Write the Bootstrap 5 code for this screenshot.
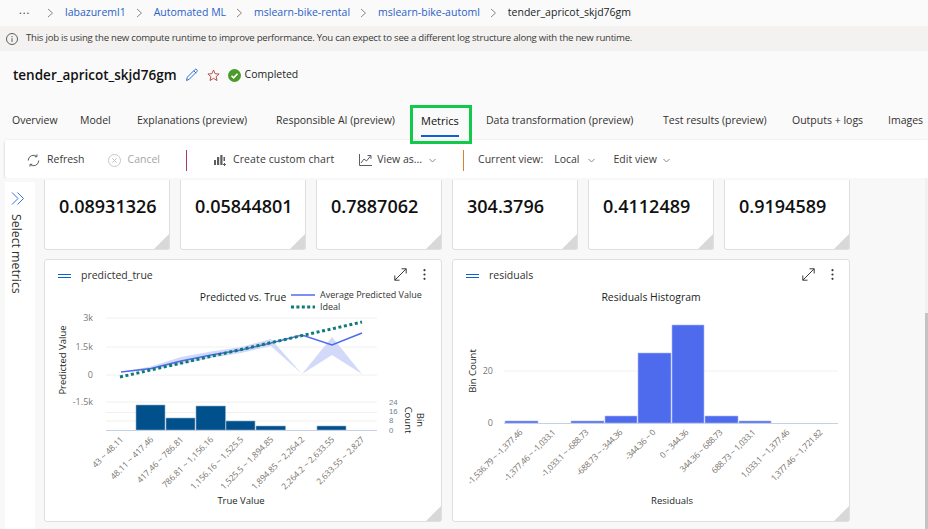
<!DOCTYPE html>
<html lang="en">
<head>
  <meta charset="UTF-8" />
  <meta name="viewport" content="width=device-width, initial-scale=1.0" />
  <title>tender_apricot_skjd76gm - Metrics</title>
  <link href="https://cdn.jsdelivr.net/npm/bootstrap@5.3.3/dist/css/bootstrap.min.css" rel="stylesheet" />
  <style>
    html, body { height: 529px; overflow: hidden; }
    body { font-family: "Open Sans", "Liberation Sans", sans-serif; font-size: 11px; background: #fafafa; color: #201f1e; }
    svg { display: block; flex: none; }

    .crumbs { height: 26px; padding-left: 19px; font-size: 10.5px; }
    .crumbs a { color: #2b5fc7; text-decoration: none; }
    .crumb-dots { width: 12px; letter-spacing: 1px; line-height: 8px; margin-top: -6px; }
    .crumb-sep { margin: 0 11px 0 10px; }
    .crumb-gap-1 { margin-left: 16px; }

    .info-bar { height: 25px; padding-left: 6px; background: #f3f2f1; font-size: 9.6px; letter-spacing: -.24px; color: #3b3a39; }

    .title-row { height: 54px; padding: 0 0 6px 13px; }
    .run-name { font-size: 13.5px; font-weight: 600; color: #111; margin: 0; }
    .run-status { font-size: 10.5px; }

    .tab-row { height: 35px; position: relative; }
    .tab-item { position: absolute; top: 8px; font-size: 10.5px; white-space: nowrap; color: #323130; }
    .tab-active { color: #111; font-size: 11px; font-weight: 500; }
    .tab-active::after { content: ""; display: block; height: 2px; background: #0f5fd7; margin-top: 5px; }
    .tab-box { position: absolute; left: 410px; top: 0; width: 62px; height: 39px; border: 3px solid #11c94a; z-index: 3; }

    .cmd-bar { height: 38px; margin-left: 5px; padding-top: 2px; background: #fff; border-radius: 2px 0 0 2px; box-shadow: 0 1px 3px rgba(0,0,0,.2); font-size: 10.5px; color: #3b3a39; }
    .cmd-item { white-space: nowrap; }
    .cmd-off { color: #a8a6a4; }
    .cmd-rule { width: 1px; height: 21px; }
    .rule-pink { background: #a4397a; }
    .rule-orange { background: #d9822b; }

    .work-area { height: 351px; background: #f8f8f8; }
    .metric-side { width: 30px; margin: 4px 0 0 5px; background: #fff; padding: 10px 0 0 2px; }
    .side-chevrons { margin-left: 4px; }
    .side-label { writing-mode: vertical-rl; font-size: 12.3px; color: #323130; margin-top: 9px; }
    .tile-area { width: 806px; margin-left: 9px; padding-top: 2px; }
    .value-tile, .chart-tile { position: relative; background: #fff; border: 1px solid #e1dfdd; }
    .value-tile { width: 126px; height: 70px; border-top: 0; border-radius: 0 0 3px 3px; font-size: 18px; font-weight: 600; color: #111; padding: 13px 0 0 14px; }
    .chart-tile { width: 398px; height: 263px; border-radius: 3px; }
    .value-tile::after, .chart-tile::after { content: ""; position: absolute; right: 0; bottom: 0; width: 15px; height: 15px; background: #d8d8d8; clip-path: polygon(100% 0, 100% 100%, 0 100%); }
    .chart-head { height: 26px; padding: 6px 15px 0 13px; font-size: 10.5px; color: #323130; }
    .chart-head-icons { margin: 0 0 3px auto; }
    .side-track { width: 3px; margin-left: auto; background: #f1f1f1; padding-top: 135px; }
    .side-thumb { height: 216px; background: #c4c4c4; }

    .txt-title { font-size: 10.4px; fill: #201f1e; }
    .txt-legend { font-size: 9px; fill: #333; }
    .txt-axis { font-size: 9.5px; fill: #201f1e; }
    .txt-tick { font-size: 9px; fill: #7a7a7a; }
    .txt-right { font-family: "Liberation Sans", sans-serif; font-size: 7.8px; fill: #6f7f99; }
    .txt-bin { font-size: 8.4px; fill: #77706a; }
    .txt-bin-tight { letter-spacing: -.35px; }
  </style>
</head>
<body>

  <!-- Breadcrumb -->
  <nav class="crumbs d-flex align-items-center">
    <span class="crumb-dots">...</span>
    <svg class="crumb-sep crumb-gap-1" width="7" height="10" viewBox="0 0 7 10"><path d="M1 1l4.500 4-4.500 4" fill="none" stroke="#8a8886"/></svg>
    <a href="#">labazureml1</a>
    <svg class="crumb-sep" width="7" height="10" viewBox="0 0 7 10"><path d="M1 1l4.500 4-4.500 4" fill="none" stroke="#8a8886"/></svg>
    <a href="#">Automated ML</a>
    <svg class="crumb-sep" width="7" height="10" viewBox="0 0 7 10"><path d="M1 1l4.500 4-4.500 4" fill="none" stroke="#8a8886"/></svg>
    <a href="#">mslearn-bike-rental</a>
    <svg class="crumb-sep" width="7" height="10" viewBox="0 0 7 10"><path d="M1 1l4.500 4-4.500 4" fill="none" stroke="#8a8886"/></svg>
    <a href="#">mslearn-bike-automl</a>
    <svg class="crumb-sep" width="7" height="10" viewBox="0 0 7 10"><path d="M1 1l4.500 4-4.500 4" fill="none" stroke="#8a8886"/></svg>
    <span>tender_apricot_skjd76gm</span>
  </nav>

  <!-- Info message -->
  <div class="info-bar d-flex align-items-center gap-2">
    <svg width="12" height="12" viewBox="0 0 12 12" fill="none" stroke="#605e5c"><circle cx="6" cy="6" r="5.500"/><path d="M6 5.200v3.800M6 3v1.200"/></svg>
    <span>This job is using the new compute runtime to improve performance. You can expect to see a different log structure along with the new runtime.</span>
  </div>

  <!-- Run title -->
  <div class="title-row d-flex align-items-center">
    <h1 class="run-name">tender_apricot_skjd76gm</h1>
    <svg class="ms-2" width="14" height="14" viewBox="0 0 14 14" fill="none" stroke="#2b6fd6"><path d="M1.500 12.500l.8-3.300 7.500-7.500a1.300 1.300 0 0 1 2 0 1.400 1.400 0 0 1 0 2l-7.500 7.500z"/><path d="M8.800 2.800l2.400 2.400"/></svg>
    <svg class="ms-2" width="13" height="13" viewBox="0 0 13 13" fill="none" stroke="#b5524f"><path d="M6.500 1l1.600 3.700 4 .3-3 2.600.9 3.900-3.500-2.100L3 11.500l.9-3.900-3-2.600 4-.3z"/></svg>
    <svg class="ms-2" width="13" height="13" viewBox="0 0 13 13"><circle cx="6.500" cy="6.500" r="6.500" fill="#4c9a2a"/><path d="M3.500 6.800l2.100 2.100 3.900-4.200" fill="none" stroke="#fff" stroke-width="1.600"/></svg>
    <span class="run-status ms-1">Completed</span>
  </div>

  <!-- Tabs -->
  <div class="tab-row">
    <span class="tab-item" style="left:12px">Overview</span>
    <span class="tab-item" style="left:80px">Model</span>
    <span class="tab-item" style="left:137px">Explanations (preview)</span>
    <span class="tab-item" style="left:276px">Responsible AI (preview)</span>
    <span class="tab-item tab-active" style="left:421px">Metrics</span>
    <span class="tab-item" style="left:486px">Data transformation (preview)</span>
    <span class="tab-item" style="left:663px">Test results (preview)</span>
    <span class="tab-item" style="left:792px">Outputs + logs</span>
    <span class="tab-item" style="left:888px">Images</span>
    <div class="tab-box"></div>
  </div>

  <!-- Command bar -->
  <div class="cmd-bar d-flex align-items-center">
    <svg style="margin-left:22px" width="13" height="13" viewBox="0 0 13 13" fill="none" stroke="#605e5c"><path d="M11.800 6.500a5.300 5.300 0 0 1-8.700 4M1.200 6.500a5.300 5.300 0 0 1 8.700-4"/><path d="M10 .4v2.300H7.700M3 12.600v-2.300h2.300"/></svg>
    <span class="cmd-item" style="margin-left:7px">Refresh</span>
    <svg style="margin-left:23px" width="13" height="13" viewBox="0 0 13 13" fill="none" stroke="#c8c6c4"><circle cx="6.500" cy="6.500" r="6"/><path d="M4.300 4.300l4.400 4.400M8.700 4.300l-4.400 4.400"/></svg>
    <span class="cmd-item cmd-off" style="margin-left:7px">Cancel</span>
    <div class="cmd-rule rule-pink" style="margin-left:26px"></div>
    <svg style="margin-left:26px" width="14" height="14" viewBox="0 0 14 14" fill="#605e5c"><path d="M1 7h2v5H1zM4 4h2.200v8H4zM7.300 2h2.200v10H7.300zM10.500 4H12v4h-1.500z"/><path d="M11 10h1v1h1v1h-1v1h-1v-1h-1v-1h1z"/></svg>
    <span class="cmd-item" style="margin-left:6px;letter-spacing:.1px">Create custom chart</span>
    <svg style="margin-left:25px" width="13" height="12" viewBox="0 0 13 12" fill="none" stroke="#605e5c"><path d="M.5 0v11.500H13"/><path d="M2 9l3-4 2.500 2L11.500 2M8.500 1.500h3.500V5"/></svg>
    <span class="cmd-item" style="margin-left:5px">View as...</span>
    <svg style="margin-left:7px" width="7" height="5" viewBox="0 0 7 5" fill="none" stroke="#8a8886"><path d="M.5 1l3 3 3-3"/></svg>
    <div class="cmd-rule rule-orange" style="margin-left:27px"></div>
    <span class="cmd-item" style="margin-left:14px">Current view:</span>
    <span class="cmd-item" style="margin-left:11px">Local</span>
    <svg style="margin-left:8px" width="7" height="5" viewBox="0 0 7 5" fill="none" stroke="#8a8886"><path d="M.5 1l3 3 3-3"/></svg>
    <span class="cmd-item" style="margin-left:19px">Edit view</span>
    <svg style="margin-left:6px" width="7" height="5" viewBox="0 0 7 5" fill="none" stroke="#8a8886"><path d="M.5 1l3 3 3-3"/></svg>
  </div>

  <!-- Work area -->
  <div class="work-area d-flex">
    <aside class="metric-side d-flex flex-column align-items-start">
      <svg class="side-chevrons" width="14" height="13" viewBox="0 0 14 13" fill="none" stroke="#3f6fd8"><path d="M1 .5l6 6-6 6M6.500 .5l6 6-6 6"/></svg>
      <span class="side-label">Select metrics</span>
    </aside>

    <div class="tile-area">
      <div class="d-flex justify-content-between" style="margin-bottom:9px">
        <div class="value-tile">0.08931326</div>
        <div class="value-tile">0.05844801</div>
        <div class="value-tile">0.7887062</div>
        <div class="value-tile">304.3796</div>
        <div class="value-tile">0.4112489</div>
        <div class="value-tile">0.9194589</div>
      </div>

      <div class="d-flex justify-content-between">
        <!-- predicted_true -->
        <div class="chart-tile">
          <div class="chart-head d-flex align-items-center">
            <svg width="13" height="5" viewBox="0 0 13 5" stroke="#0f5fd7"><path d="M0 .5h13M0 3.500h13"/></svg>
            <span style="margin-left:10px">predicted_true</span>
            <div class="chart-head-icons d-flex align-items-center gap-3">
              <svg width="13" height="13" viewBox="0 0 13 13" fill="none" stroke="#3b3a39"><path d="M.8 12.200L12.200 .8M7.500 .8h4.700v4.700M.8 7.500v4.700h4.700"/></svg>
              <svg width="3" height="11" viewBox="0 0 3 11" fill="#3b3a39"><circle cx="1.500" cy="1.200" r="1.100"/><circle cx="1.500" cy="5.500" r="1.100"/><circle cx="1.500" cy="9.800" r="1.100"/></svg>
            </div>
          </div>
          <svg width="396" height="235" viewBox="45 286 396 235">
            <text class="txt-title" x="243" y="301" text-anchor="middle">Predicted vs. True</text>
            <path d="M291 295h24" stroke="#4f6bed" stroke-width="1.500"/>
            <text class="txt-legend" x="320" y="298">Average Predicted Value</text>
            <path d="M291 307h24" stroke="#0f7b75" stroke-width="3" stroke-dasharray="3 2.400"/>
            <text class="txt-legend" x="320" y="310">Ideal</text>

            <g stroke="#f0f0f0"><path d="M106 318h271M106 347h271M106 375h271M106 402h271M106 412.500h271M106 421h271"/></g>
            <text class="txt-tick" x="93" y="321" text-anchor="end">3k</text>
            <text class="txt-tick" x="93" y="350" text-anchor="end">1.5k</text>
            <text class="txt-tick" x="93" y="378" text-anchor="end">0</text>
            <text class="txt-tick" x="93" y="405" text-anchor="end">-1.5k</text>
            <text class="txt-axis" transform="translate(66 360) rotate(-90)" text-anchor="middle">Predicted Value</text>

            <path d="M121 372L151 366.500 181 357 211 351.500 241 347 271 339 302 374 332 337 362 374 332 355 302 374 271 346 241 353 211 358 181 364 151 370z" fill="#d3daf9"/>
            <path d="M121 372L151 368.500 181 361 211 355 241 350 271 343 302 335 332 345 362 333" fill="none" stroke="#4f6bed" stroke-width="1.500"/>
            <path d="M120 377L362 322" fill="none" stroke="#0f7b75" stroke-width="3" stroke-dasharray="3 2.600"/>

            <g fill="#00508c" stroke="#8fb0cf" stroke-width=".6">
              <path d="M136 405h29v25h-29zM166 418h29v12h-29zM196 406h29.500v24H196zM226 421h29v9h-29zM256 426h29.500v4H256zM317 426h29v4h-29z"/>
            </g>
            <path d="M106 430.500h271" stroke="#c5d0e6"/>
            <text class="txt-right" x="389" y="405">24</text>
            <text class="txt-right" x="389" y="414">16</text>
            <text class="txt-right" x="389" y="423">8</text>
            <text class="txt-right" x="389" y="433">0</text>
            <text class="txt-axis" transform="translate(405 420) rotate(90)" text-anchor="middle">Count</text>
            <text class="txt-axis" transform="translate(417 420) rotate(90)" text-anchor="middle">Bin</text>

            <text class="txt-bin" transform="translate(124 440) rotate(-45)" text-anchor="end">43 ~ 48.11</text>
            <text class="txt-bin" transform="translate(154 440) rotate(-45)" text-anchor="end">48.11 ~ 417.46</text>
            <text class="txt-bin" transform="translate(184 440) rotate(-45)" text-anchor="end">417.46 ~ 786.81</text>
            <text class="txt-bin" transform="translate(214 440) rotate(-45)" text-anchor="end">786.81 ~ 1,156.16</text>
            <text class="txt-bin" transform="translate(244 440) rotate(-45)" text-anchor="end">1,156.16 ~ 1,525.5</text>
            <text class="txt-bin" transform="translate(274 440) rotate(-45)" text-anchor="end">1,525.5 ~ 1,894.85</text>
            <text class="txt-bin" transform="translate(305 440) rotate(-45)" text-anchor="end">1,894.85 ~ 2,264.2</text>
            <text class="txt-bin" transform="translate(335 440) rotate(-45)" text-anchor="end">2,264.2 ~ 2,633.55</text>
            <text class="txt-bin" transform="translate(365 440) rotate(-45)" text-anchor="end">2,633.55 ~ 2,827</text>

            <text class="txt-axis" x="241" y="504" text-anchor="middle">True Value</text>
          </svg>
        </div>

        <!-- residuals -->
        <div class="chart-tile">
          <div class="chart-head d-flex align-items-center">
            <svg width="13" height="5" viewBox="0 0 13 5" stroke="#0f5fd7"><path d="M0 .5h13M0 3.500h13"/></svg>
            <span style="margin-left:10px">residuals</span>
            <div class="chart-head-icons d-flex align-items-center gap-3">
              <svg width="13" height="13" viewBox="0 0 13 13" fill="none" stroke="#3b3a39"><path d="M.8 12.200L12.200 .8M7.500 .8h4.700v4.700M.8 7.500v4.700h4.700"/></svg>
              <svg width="3" height="11" viewBox="0 0 3 11" fill="#3b3a39"><circle cx="1.500" cy="1.200" r="1.100"/><circle cx="1.500" cy="5.500" r="1.100"/><circle cx="1.500" cy="9.800" r="1.100"/></svg>
            </div>
          </div>
          <svg width="396" height="235" viewBox="453 286 396 235">
            <text class="txt-title" x="651" y="301" text-anchor="middle">Residuals Histogram</text>
            <path d="M504 371h334" stroke="#f0f0f0"/>
            <text class="txt-tick" x="493" y="374" text-anchor="end">20</text>
            <text class="txt-tick" x="493" y="426" text-anchor="end">0</text>
            <text class="txt-axis" transform="translate(476 371) rotate(-90)" text-anchor="middle">Bin Count</text>

            <g fill="#4f6bed" stroke="#a9b8f6" stroke-width=".6">
              <path d="M505 421h33v2h-33zM571 421h33v2h-33zM605 416h32v7h-32zM638 353h33v70h-33zM672 325h32v98h-32zM705 416h33v7h-33zM739 421h32v2h-32z"/>
            </g>
            <path d="M504 423.500h334" stroke="#c5d0e6"/>

            <text class="txt-bin txt-bin-tight" transform="translate(523 433) rotate(-45)" text-anchor="end">-1,536.79 ~ -1,377.46</text>
            <text class="txt-bin txt-bin-tight" transform="translate(556 433) rotate(-45)" text-anchor="end">-1,377.46 ~ -1,033.1</text>
            <text class="txt-bin txt-bin-tight" transform="translate(589 433) rotate(-45)" text-anchor="end">-1,033.1 ~ -688.73</text>
            <text class="txt-bin txt-bin-tight" transform="translate(623 433) rotate(-45)" text-anchor="end">-688.73 ~ -344.36</text>
            <text class="txt-bin txt-bin-tight" transform="translate(656 433) rotate(-45)" text-anchor="end">-344.36 ~ 0</text>
            <text class="txt-bin txt-bin-tight" transform="translate(689 433) rotate(-45)" text-anchor="end">0 ~ 344.36</text>
            <text class="txt-bin txt-bin-tight" transform="translate(723 433) rotate(-45)" text-anchor="end">344.36 ~ 688.73</text>
            <text class="txt-bin txt-bin-tight" transform="translate(756 433) rotate(-45)" text-anchor="end">688.73 ~ 1,033.1</text>
            <text class="txt-bin txt-bin-tight" transform="translate(790 433) rotate(-45)" text-anchor="end">1,033.1 ~ 1,377.46</text>
            <text class="txt-bin txt-bin-tight" transform="translate(823 433) rotate(-45)" text-anchor="end">1,377.46 ~ 1,721.82</text>

            <text class="txt-axis" x="672" y="504" text-anchor="middle">Residuals</text>
          </svg>
        </div>
      </div>
    </div>

    <div class="side-track"><div class="side-thumb"></div></div>
  </div>

  <script src="https://cdn.jsdelivr.net/npm/bootstrap@5.3.3/dist/js/bootstrap.bundle.min.js"></script>
</body>
</html>
